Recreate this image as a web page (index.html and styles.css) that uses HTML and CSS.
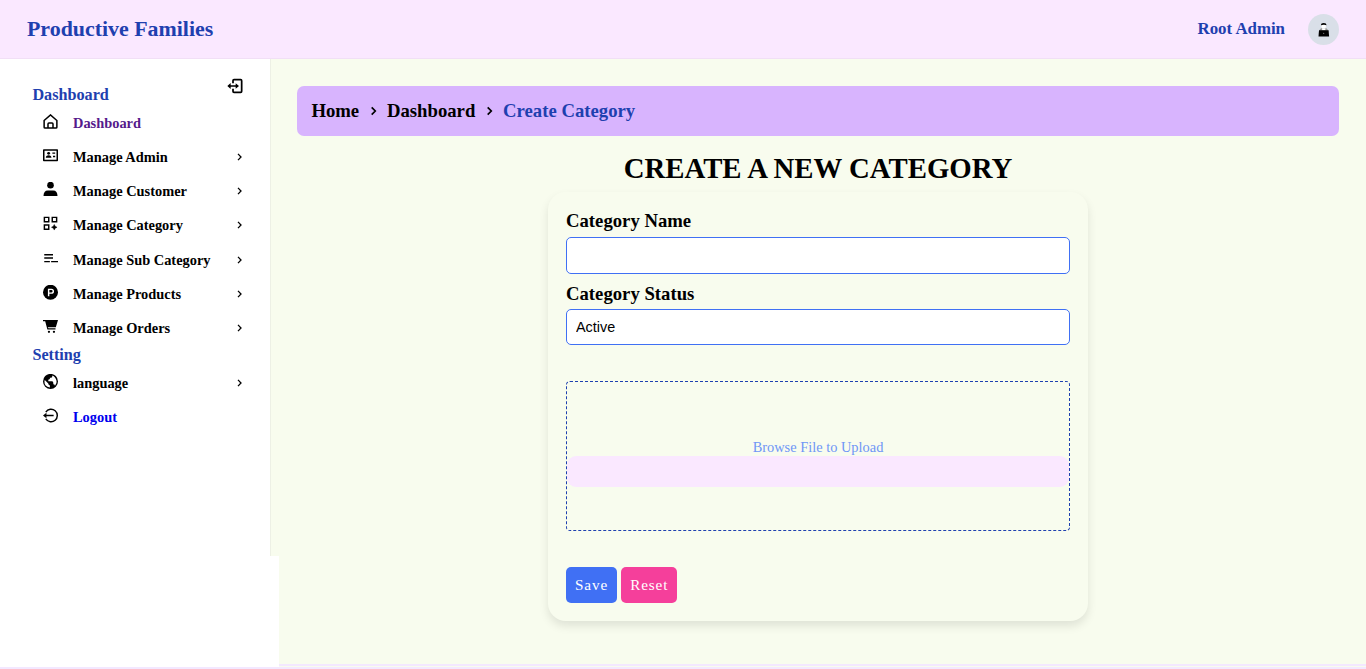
FILE: index.html
```html
<!DOCTYPE html>
<html lang="en">
<head>
<meta charset="utf-8">
<title>Productive Families</title>
<link rel="stylesheet" href="styles.css">
</head>
<body>
<header class="topbar">
  <div class="brand">Productive Families</div>
  <div class="user"><span class="user-name">Root Admin</span>
    <span class="avatar"><svg width="31" height="31" viewBox="0 0 31 31"><path d="M11.500 17q0-2.500 2.800-2.900h2.800q2.800.4 2.800 2.900z" fill="#999"/><path d="M13.800 14.200h3.800l-.5 2h-2.800z" fill="#fff"/><ellipse cx="15.700" cy="12" rx="2.300" ry="2.500" fill="#fff"/><path d="M13 11.300q-.1-2.300 2.700-2.300t2.700 2.300q-1-.7-2.700-.6t-2.700.6z" fill="#000"/><path d="M11 16.300h9.600l.5 6.200H10.500z" fill="#000"/><circle cx="15.700" cy="19.300" r=".6" fill="#888"/></svg></span>
  </div>
</header>
<div class="layout">
  <div class="side">
    <nav class="sidebar">
      <div class="side-head"><h2 class="side-title">Dashboard</h2>
        <svg class="toggle" width="16" height="16" viewBox="0 0 24 24" fill="none" stroke="#000" stroke-width="2.600"><path d="M9 8V4q0-1.500 1.500-1.500h10Q22 2.500 22 4v16q0 1.500-1.500 1.500h-10Q9 21.500 9 20v-4M3 12h13"/><path d="M5.500 7.500v9L.5 12zM13 7.800v8.400l5-4.200z" fill="#000" stroke="none"/></svg>
      </div>
      <ul class="menu">
        <li class="item visited"><svg class="icon" viewBox="0 0 24 24" fill="none" stroke="#000" stroke-width="2.400"><path d="M1.800 10.500L12 1.500l10.200 9V21q0 1.500-1.500 1.500H3.300q-1.500 0-1.500-1.500zM8 22v-6q0-1.500 1.500-1.500h5q1.500 0 1.500 1.500v6"/></svg><span class="label">Dashboard</span></li>
        <li class="item"><svg class="icon" viewBox="0 0 24 24"><path d="M1.200 3h21.600v17H1.200z" fill="none" stroke="#000" stroke-width="2.400" stroke-linejoin="round"/><circle cx="9" cy="8.500" r="2.300"/><path d="M4.500 15.500q0-4 4.500-4t4.500 4zM15 7h4.500v2.200H15zM16 12.500h3.500v2.200H16z"/></svg><span class="label">Manage Admin</span><svg class="arrow" viewBox="0 0 10 10"><path d="M3 1.900L6 5 3 8.100"/></svg></li>
        <li class="item"><svg class="icon" viewBox="0 0 24 24"><circle cx="12" cy="5" r="5.300"/><path d="M.8 22.500q0-9 7-9h8.400q7 0 7 9z"/></svg><span class="label">Manage Customer</span><svg class="arrow" viewBox="0 0 10 10"><path d="M3 1.900L6 5 3 8.100"/></svg></li>
        <li class="item category"><svg class="icon" viewBox="0 0 24 24"><path d="M2.200 2.200h7v7h-7zM14.800 2.200h7v7h-7zM2.200 14.300h7v7h-7z" fill="none" stroke="#000" stroke-width="2.300"/><path d="M18 13.500l1.500 3 3 1.500-3 1.500-1.500 3-1.500-3-3-1.500 3-1.500z" stroke="#000" stroke-width=".7"/></svg><span class="label">Manage Category</span><svg class="arrow" viewBox="0 0 10 10"><path d="M3 1.900L6 5 3 8.100"/></svg></li>
        <li class="item"><svg class="icon" viewBox="0 0 24 24" fill="none" stroke="#000" stroke-width="2.300"><path d="M2 6h14M2 11.300h14M2 17h9M13 17h11"/></svg><span class="label">Manage Sub Category</span><svg class="arrow" viewBox="0 0 10 10"><path d="M3 1.900L6 5 3 8.100"/></svg></li>
        <li class="item"><svg class="icon" viewBox="0 0 24 24"><circle cx="12" cy="11.600" r="12"/><path d="M9 18V7h4.500q3 0 3 3t-3 3H9" fill="none" stroke="#fff" stroke-width="2.300"/></svg><span class="label">Manage Products</span><svg class="arrow" viewBox="0 0 10 10"><path d="M3 1.900L6 5 3 8.100"/></svg></li>
        <li class="item"><svg class="icon" viewBox="0 0 24 24"><path d="M0 1.500h24l-3.500 11.500H7.500l1.200 1.700H20v2H7L3.500 3.500H0z"/><circle cx="9.500" cy="20.500" r="1.800"/><circle cx="17.500" cy="20.500" r="1.800"/></svg><span class="label">Manage Orders</span><svg class="arrow" viewBox="0 0 10 10"><path d="M3 1.900L6 5 3 8.100"/></svg></li>
      </ul>
      <h2 class="side-title setting">Setting</h2>
      <ul class="menu">
        <li class="item"><svg class="icon" viewBox="0 0 24 24"><circle cx="12" cy="11.800" r="12"/><path d="M2.800 9.500l5.700 5.500v1.500l2.500 2v3Q2 20 2.300 12zM15 2.500q0 3.500-2 3.500h-2v2l-2.500 1v2.500h6q2 0 2 3v2q2 0 2.700 2.200Q22.500 15 21.700 11 20 4.500 15 2.500z" fill="#fff"/></svg><span class="label">language</span><svg class="arrow" viewBox="0 0 10 10"><path d="M3 1.900L6 5 3 8.100"/></svg></li>
        <li class="item link logout"><svg class="icon" viewBox="0 0 24 24" fill="none" stroke="#000" stroke-width="2.300"><path d="M4.500 6.500a10 10 0 1 1 0 11M3 12h14"/><path d="M5.500 7.500v9L0 12z" fill="#000" stroke="none"/></svg><span class="label">Logout</span></li>
      </ul>
    </nav>
    <div class="side-fill"></div>
  </div>
  <main class="content">
    <div class="crumbs"><span>Home</span><svg class="sep" viewBox="0 0 10 10"><path d="M3.900 2L6.900 5 3.900 8"/></svg><span>Dashboard</span><svg class="sep" viewBox="0 0 10 10"><path d="M3.900 2L6.900 5 3.900 8"/></svg><span class="current">Create Category</span></div>
    <h1 class="title">CREATE A NEW CATEGORY</h1>
    <form class="card">
      <label class="field-label" for="name">Category Name</label>
      <input class="field name-field" id="name" type="text">
      <label class="field-label status-label" for="status">Category Status</label>
      <select class="field" id="status"><option>Active</option></select>
      <div class="drop"><span class="drop-text">Browse File to Upload</span><div class="drop-bar"></div></div>
      <div class="actions"><button class="btn save" type="button">Save</button><button class="btn reset" type="button">Reset</button></div>
    </form>
    <div class="content-line"></div>
  </main>
</div>
<div class="bottom-line"></div>
</body>
</html>
```
FILE: styles.css
```css
* { box-sizing: border-box; margin: 0; padding: 0; }
body { height: 669px; overflow: hidden; display: flex; flex-direction: column; background: #f8fcee; font-family: "Liberation Serif", "Times New Roman", serif; color: #000; }
.topbar { height: 59px; flex: none; display: flex; align-items: center; justify-content: space-between; padding: 0 27px; background: #fae8ff; border-bottom: 1px solid #f1dff6; }
.brand { font-size: 21.9px; line-height: 26px; font-weight: bold; color: #1e40af; }
.user { display: flex; align-items: center; gap: 23px; }
.user-name { font-size: 16.85px; font-weight: bold; color: #1e40af; }
.avatar { width: 31px; height: 31px; border-radius: 50%; background: #d9dfe8; overflow: hidden; }
.avatar svg { display: block; }
.layout { flex: 1; min-height: 0; display: flex; }
.side { width: 279px; flex: none; display: flex; flex-direction: column; }
.sidebar { width: 271px; height: 497px; flex: none; background: #fff; border-right: 1px solid #edf0e5; padding-top: 18px; }
.side-fill { flex: 1; background: #fff; }
.side-head { height: 29px; display: flex; justify-content: space-between; padding-right: 27.5px; }
.side-title { padding-left: 32.4px; font-size: 16.2px; line-height: 18px; color: #1e40af; }
.side-head .side-title { padding-top: 9px; }
.toggle { margin-top: 1px; }
.menu { list-style: none; }
.item { height: 34.2px; display: flex; align-items: flex-start; padding: 0 25px 0 43px; font-size: 14.4px; line-height: 34px; font-weight: bold; }
.category { height: 34.6px; margin-top: -.4px; }
.icon { width: 15px; height: 15px; margin: 8px 15px 0 0; flex: none; }
.label { flex: 1; }
.arrow { width: 10px; height: 10px; margin-top: 12px; fill: none; stroke: #000; stroke-width: 1.3; }
.visited { color: #551a8b; }
.link { color: #0000ee; }
.setting { height: 20.4px; padding-top: .6px; }
.logout { margin-top: -.3px; }
.content { flex: 1; min-width: 0; display: flex; flex-direction: column; padding: 27px 27px 1px 18px; }
.crumbs { height: 50px; flex: none; display: flex; align-items: center; padding: 0 14.4px; border-radius: 7px; background: #d8b4fe; font-size: 18.72px; font-weight: bold; }
.sep { width: 12px; height: 12px; margin: 0 7.9px; fill: none; stroke: #000; stroke-width: 1.4; }
.current { color: #1e40af; }
.title { margin-top: 15px; font-size: 28.8px; line-height: 34px; text-align: center; }
.card { width: 540px; height: 429px; flex: none; margin: 7px auto 0; padding: 18px; display: flex; flex-direction: column; border-radius: 18px; box-shadow: 0 5px 10px rgba(0,0,0,.1); }
.field-label { font-size: 18.72px; line-height: 22px; font-weight: bold; }
.field { height: 36px; flex: none; width: 100%; border: 1px solid #4070f4; border-radius: 5px; padding: 0 9px; background: #fff; font: 14.4px "Liberation Sans", Arial, sans-serif; color: #000; appearance: none; }
.name-field { height: 37px; margin-top: 5px; }
.status-label { margin: 9px 0 4px; }
.drop { height: 150px; flex: none; margin-top: 36px; padding-top: 12px; border: 1px dashed #1e40af; border-radius: 4px; display: flex; flex-direction: column; justify-content: center; align-items: center; }
.drop-text { font-size: 14.4px; line-height: 18px; color: #6f96f6; }
.drop-bar { width: 100%; height: 31px; border-radius: 9px; background: #fae8ff; }
.actions { display: flex; gap: 4px; margin-top: 36px; }
.btn { height: 36px; padding: 0 9px; border: 0; border-radius: 5px; color: #fff; font: 15.2px "Liberation Serif", serif; letter-spacing: .9px; }
.save { background: #4070f4; }
.reset { background: #f53f9b; }
.content-line { height: 2px; margin: auto -27px 0 -18px; background: #f3e8ff; }
.bottom-line { height: 2px; flex: none; background: #f3e8ff; }
```
